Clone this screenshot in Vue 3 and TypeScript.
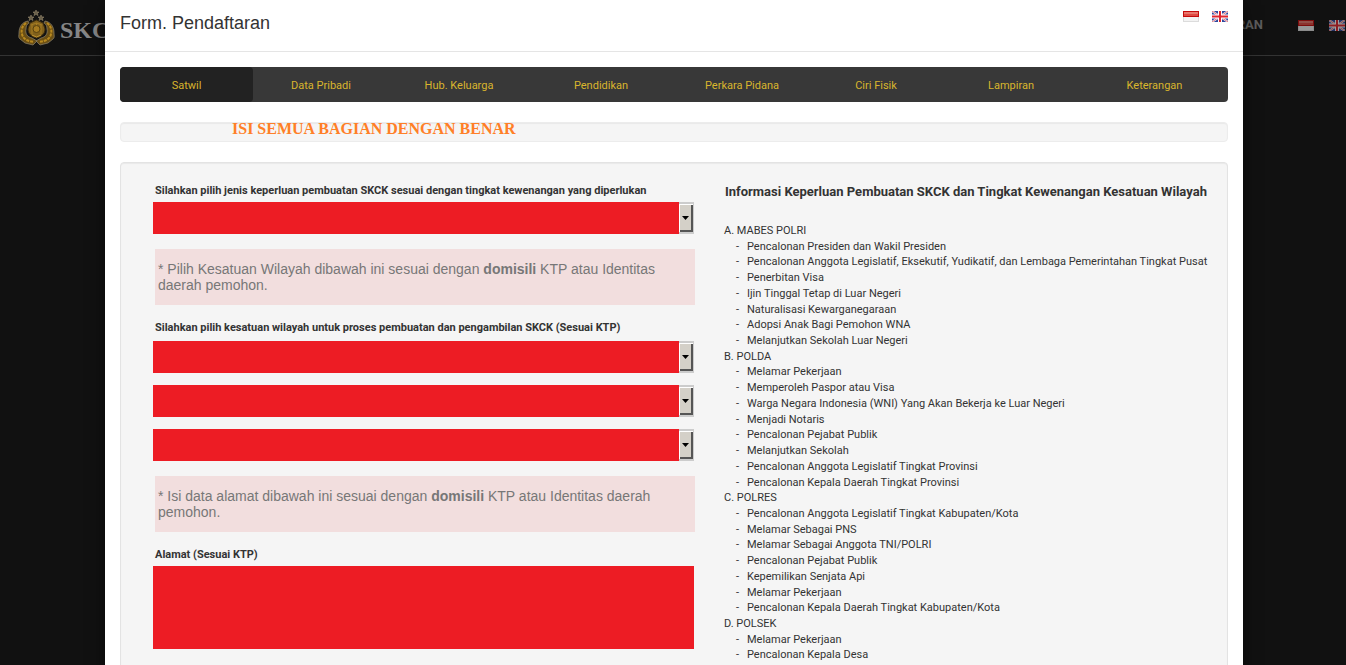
<script setup lang="ts">
import { ref } from 'vue'

interface Section {
  title: string
  items: string[]
}

const tabs: string[] = [
  'Satwil',
  'Data Pribadi',
  'Hub. Keluarga',
  'Pendidikan',
  'Perkara Pidana',
  'Ciri Fisik',
  'Lampiran',
  'Keterangan',
]
const active = ref(0)

const regions: string[] = ['Provinsi', 'Kabupaten/Kota', 'Kecamatan']

const sections: Section[] = [
  {
    title: 'A. MABES POLRI',
    items: [
      'Pencalonan Presiden dan Wakil Presiden',
      'Pencalonan Anggota Legislatif, Eksekutif, Yudikatif, dan Lembaga Pemerintahan Tingkat Pusat',
      'Penerbitan Visa',
      'Ijin Tinggal Tetap di Luar Negeri',
      'Naturalisasi Kewarganegaraan',
      'Adopsi Anak Bagi Pemohon WNA',
      'Melanjutkan Sekolah Luar Negeri',
    ],
  },
  {
    title: 'B. POLDA',
    items: [
      'Melamar Pekerjaan',
      'Memperoleh Paspor atau Visa',
      'Warga Negara Indonesia (WNI) Yang Akan Bekerja ke Luar Negeri',
      'Menjadi Notaris',
      'Pencalonan Pejabat Publik',
      'Melanjutkan Sekolah',
      'Pencalonan Anggota Legislatif Tingkat Provinsi',
      'Pencalonan Kepala Daerah Tingkat Provinsi',
    ],
  },
  {
    title: 'C. POLRES',
    items: [
      'Pencalonan Anggota Legislatif Tingkat Kabupaten/Kota',
      'Melamar Sebagai PNS',
      'Melamar Sebagai Anggota TNI/POLRI',
      'Pencalonan Pejabat Publik',
      'Kepemilikan Senjata Api',
      'Melamar Pekerjaan',
      'Pencalonan Kepala Daerah Tingkat Kabupaten/Kota',
    ],
  },
  {
    title: 'D. POLSEK',
    items: ['Melamar Pekerjaan', 'Pencalonan Kepala Desa'],
  },
]
</script>

<template>
  <div class="page">
    <svg class="defs" width="0" height="0" aria-hidden="true">
      <symbol id="flag-id" viewBox="0 0 16 11">
        <rect width="16" height="11" fill="#dcdcdc" />
        <rect width="16" height="6" fill="#c40c0c" />
        <rect x="1" y="1" width="14" height="4" fill="#df4a42" />
        <rect x="1" y="1" width="14" height="2" fill="#e8776d" />
        <rect x="1" y="6" width="14" height="4" fill="#f3f3f3" />
      </symbol>
      <symbol id="flag-gb" viewBox="0 0 16 11">
        <rect width="16" height="11" fill="#2f479c" />
        <path d="M0 0L16 11M16 0L0 11" stroke="#f2eef4" stroke-width="2" />
        <path d="M0 0L16 11M16 0L0 11" stroke="#dd5560" stroke-width=".8" />
        <path d="M8 0V11M0 5.500H16" stroke="#fff" stroke-width="4" />
        <path d="M8 0V11M0 5.500H16" stroke="#e0262f" stroke-width="2" />
      </symbol>
    </svg>

    <header class="site">
      <a class="brand" href="#" aria-label="SKCK">
        <svg class="emblem" viewBox="0 0 38 38" aria-hidden="true">
          <g fill="#6a604b" stroke="#a09375" stroke-width=".5">
            <path d="M18 1l1 2h2l-1.600 1.400.6 2.200-2-1.300-2 1.300.6-2.200L15 3h2z" />
            <path d="M13 6l1 2h2l-1.600 1.400.6 2.200-2-1.300-2 1.300.6-2.200L10 8h2z" />
            <path d="M23 6l1 2h2l-1.600 1.400.6 2.200-2-1.300-2 1.300.6-2.200L20 8h2z" />
          </g>
          <g fill="#6b4f14" stroke="#8d8470" stroke-width=".7">
            <path d="M10 12C4 13 1 18 1 24c0 3-1 4 1 6l5 4 8 2 4-4-5-3c-5-1-7-5-6-9 0-3 1-5 3-6z" />
            <path d="M27 12c6 1 9 6 9 12 0 3 1 4-1 6l-5 4-8 2-4-4 5-3c5-1 7-5 6-9 0-3-1-5-3-6z" />
          </g>
          <g fill="none" stroke="#b8891f" stroke-width="2" stroke-dasharray="3 1">
            <path d="M8 14c-4 3-5 7-4 11 1 5 5 7 12 8" />
            <path d="M29 14c4 3 5 7 4 11-1 5-5 7-12 8" />
          </g>
          <path d="M12 14l6.500-3 6.500 3 2 6c0 5-4 8-8.500 9-4.500-1-8.500-4-8.500-9z" fill="#80601c" stroke="#3d2c0c" />
          <path d="M13 16l5.500-2 5.500 2M14 16v9M23 16v9M18.500 14v4" fill="none" stroke="#a67c22" />
          <circle cx="18.500" cy="20" r="3.500" fill="#a67b20" stroke="#5a420f" />
          <path d="M14 26l4.500 2 4.500-2" fill="none" stroke="#bd9233" />
        </svg>
        <span>SKCK</span>
      </a>
      <div class="site-right">
        <a class="menu" href="#">PENDAFTARAN</a>
        <a class="flag" href="#" aria-label="Bahasa Indonesia"><svg viewBox="0 0 16 11"><use href="#flag-id" /></svg></a>
        <a class="flag" href="#" aria-label="English"><svg viewBox="0 0 16 11"><use href="#flag-gb" /></svg></a>
      </div>
    </header>

    <section class="modal" role="dialog" aria-labelledby="form-title">
      <header class="modal-head">
        <h1 id="form-title">Form. Pendaftaran</h1>
        <div class="langs">
          <a class="flag" href="#" aria-label="Bahasa Indonesia"><svg viewBox="0 0 16 11"><use href="#flag-id" /></svg></a>
          <a class="flag" href="#" aria-label="English"><svg viewBox="0 0 16 11"><use href="#flag-gb" /></svg></a>
        </div>
      </header>

      <div class="modal-body">
        <nav class="tabs">
          <button
            v-for="(tab, i) in tabs"
            :key="tab"
            type="button"
            :class="{ active: i === active }"
            @click="active = i"
          >{{ tab }}</button>
        </nav>

        <p class="banner">ISI SEMUA BAGIAN DENGAN BENAR</p>

        <div class="well">
          <form class="fields" @submit.prevent>
            <label for="purpose">Silahkan pilih jenis keperluan pembuatan SKCK sesuai dengan tingkat kewenangan yang diperlukan</label>
            <div class="pick">
              <select id="purpose"></select>
              <span class="arrow" aria-hidden="true"><svg viewBox="0 0 7 4"><path d="M0 0h7L3.500 4z" /></svg></span>
            </div>

            <p class="notice">* Pilih Kesatuan Wilayah dibawah ini sesuai dengan <b>domisili</b> KTP atau Identitas daerah pemohon.</p>

            <label for="region-0">Silahkan pilih kesatuan wilayah untuk proses pembuatan dan pengambilan SKCK (Sesuai KTP)</label>
            <div class="picks">
              <div v-for="(region, i) in regions" :key="region" class="pick">
                <select :id="'region-' + i" :aria-label="region"></select>
                <span class="arrow" aria-hidden="true"><svg viewBox="0 0 7 4"><path d="M0 0h7L3.500 4z" /></svg></span>
              </div>
            </div>

            <p class="notice">* Isi data alamat dibawah ini sesuai dengan <b>domisili</b> KTP atau Identitas daerah pemohon.</p>

            <label for="address">Alamat (Sesuai KTP)</label>
            <textarea id="address"></textarea>
          </form>

          <aside class="info">
            <h2>Informasi Keperluan Pembuatan SKCK dan Tingkat Kewenangan Kesatuan Wilayah</h2>
            <div v-for="section in sections" :key="section.title">
              <h3>{{ section.title }}</h3>
              <ul>
                <li v-for="item in section.items" :key="item">{{ item }}</li>
              </ul>
            </div>
          </aside>
        </div>
      </div>
    </section>
  </div>
</template>

<style>
body {
  background: #111;
  overflow: hidden;
}
</style>

<style scoped>
* {
  box-sizing: border-box;
}
.page {
  position: relative;
  height: 100vh;
  overflow: hidden;
  background: #111;
  color: #333;
  font-family: Roboto, sans-serif;
  font-size: 11px;
  line-height: 16px;
}
.defs {
  position: absolute;
}
h1, h2, h3, p, ul {
  margin: 0;
  padding: 0;
}
a {
  color: inherit;
  text-decoration: none;
}
.site {
  display: flex;
  justify-content: space-between;
  height: 56px;
  padding: 0 1px 0 18px;
  border-bottom: 1px solid #333;
}
.brand {
  display: flex;
  align-items: center;
  gap: 4px;
  color: #858585;
  font: bold 24px/32px "Liberation Serif", serif;
}
.brand span {
  padding-top: 4px;
}
.emblem {
  width: 38px;
  height: 38px;
}
.site-right {
  display: flex;
  align-items: center;
  gap: 15px;
  height: 50px;
}
.site-right .flag {
  opacity: 0.6;
}
.menu {
  margin-right: 20px;
  color: #5c5c5c;
  font: bold 13px/20px Roboto, sans-serif;
}
.flag,
.flag svg {
  display: block;
  width: 16px;
  height: 11px;
}
.modal {
  position: absolute;
  top: 0;
  right: 103px;
  left: 105px;
  min-height: 100%;
  background: #fff;
  box-shadow: 0 5px 15px rgba(0, 0, 0, 0.5);
}
.modal-head {
  display: flex;
  justify-content: space-between;
  height: 52px;
  padding: 11px 15px;
  border-bottom: 1px solid #e5e5e5;
}
.modal-head h1 {
  font: 18px/24px "Liberation Sans", Arial, sans-serif;
}
.langs {
  display: flex;
  gap: 13px;
}
.modal-body {
  display: flex;
  flex-direction: column;
  gap: 20px;
  padding: 15px;
}
.tabs {
  display: grid;
  grid-template-columns: 133fr 136fr 140fr 144fr 138fr 130fr 140fr 147fr;
  height: 35px;
  border-radius: 4px;
  background: #383838;
  overflow: hidden;
}
.tabs button {
  padding: 2px 0 0;
  border: 0;
  border-radius: 4px;
  background: none;
  color: #d9b52d;
  font: inherit;
}
.tabs .active {
  background: #222;
}
.banner,
.well {
  border: 1px solid #e3e3e3;
  border-radius: 4px;
  background: #f5f5f5;
  box-shadow: inset 0 1px 1px rgba(0, 0, 0, 0.05);
}
.banner {
  height: 20px;
  padding-left: 111px;
  border-color: #ececec;
  color: #ff7f27;
  font: bold 16px/12px "Liberation Serif", serif;
}
.well {
  display: grid;
  grid-template-columns: minmax(0, 542fr) minmax(0, 503fr);
  gap: 29px;
  padding: 20px 0 20px 32px;
}
.fields {
  display: flex;
  flex-direction: column;
}
.fields label {
  padding-left: 2px;
  font-weight: bold;
  white-space: nowrap;
}
.pick {
  position: relative;
  margin: 3px 1px 0 0;
}
.picks {
  display: grid;
  gap: 12px;
  margin-top: 5px;
}
.picks .pick {
  margin-top: 0;
}
select,
textarea {
  display: block;
  width: 100%;
  border: 0;
  border-radius: 0;
  background: #ed1c24;
  appearance: none;
}
select {
  height: 32px;
}
textarea {
  width: auto;
  height: 83px;
  margin: 3px 1px 0 0;
  resize: none;
}
.arrow {
  position: absolute;
  top: 0;
  right: 0;
  bottom: 0;
  display: grid;
  place-items: center;
  width: 15px;
  padding-right: 2px;
  border: 1px solid #ccc;
  border-width: 2px 1px 2px 0;
  background: #d4d0c8;
  box-shadow: inset 1px 1px #fff, inset -2px -2px #555;
  pointer-events: none;
}
.arrow svg {
  width: 7px;
  height: 4px;
}
.notice {
  min-height: 56px;
  margin: 15px 0 15px 2px;
  padding: 12px 3px;
  background: #f2dede;
  color: #777;
  font: 14px/16px "Liberation Sans", Arial, sans-serif;
}
.info h2 {
  margin-bottom: 22px;
  padding-left: 1px;
  font-size: 13px;
  line-height: 18px;
  white-space: nowrap;
}
.info h3 {
  font: inherit;
}
.info div {
  line-height: 1.43;
}
.info ul {
  padding-left: 23px;
  list-style: none;
}
.info li {
  position: relative;
  white-space: nowrap;
}
.info li::before {
  content: "-";
  position: absolute;
  left: -11px;
}
</style>
